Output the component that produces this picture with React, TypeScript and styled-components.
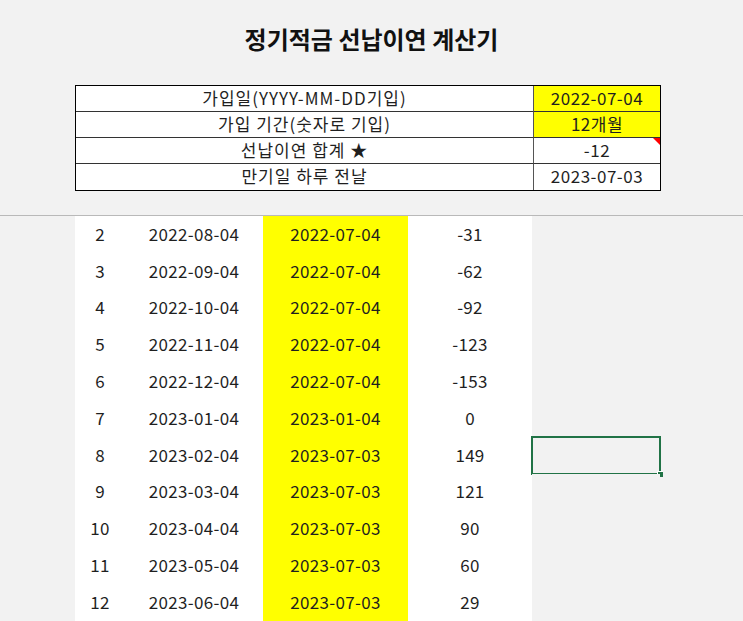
import React from "react";
import styled, { createGlobalStyle } from "styled-components";

const Global = createGlobalStyle`
  html, body { margin: 0; padding: 0; background: #f2f2f2; }
  body { font-family: "Noto Sans CJK KR", "Noto Sans", sans-serif; color: #1f1f1f; }
  * { box-sizing: border-box; }
`;

const Page = styled.div`
  width: 743px;
  height: 621px;
  overflow: hidden;
  background: #f2f2f2;
`;

const Header = styled.div`
  height: 216px;
  border-bottom: 1px solid #b9b9b9;
  padding-top: 21px;
`;

const Title = styled.h1`
  margin: 0;
  height: 36px;
  font-size: 24px;
  line-height: 36px;
  font-weight: 700;
  text-align: center;
  color: #111;
`;

const InfoTable = styled.div`
  margin: 28px 0 0 75px;
  width: 586px;
  border: 1px solid #000;
  background: #fff;
  display: grid;
  grid-template-columns: 457px 1fr;
`;

const InfoCell = styled.div<{ $yellow?: boolean; $value?: boolean; $last?: boolean }>`
  position: relative;
  height: 26px;
  border-bottom: ${(p) => (p.$last ? "none" : "1px solid #333")};
  border-left: ${(p) => (p.$value ? "1px solid #555" : "none")};
  background: ${(p) => (p.$yellow ? "#ffff00" : "#fff")};
  font-size: 17px;
  letter-spacing: ${(p) => (p.$value ? "0.5px" : "1px")};
  line-height: 24px;
  text-align: center;
  color: #1f1f1f;
`;

const NoteMark = styled.span`
  position: absolute;
  top: 0;
  right: 0;
  width: 0;
  height: 0;
  border-top: 7px solid #ff0000;
  border-left: 7px solid transparent;
`;

const Grid = styled.div`
  display: grid;
  grid-template-columns: 75px 50px 138px 145px 124px 128px 1fr;
  grid-auto-rows: 36.8px;
`;

const Gutter = styled.div`
  background: #f2f2f2;
`;

const Cell = styled.div<{ $yellow?: boolean }>`
  background: ${(p) => (p.$yellow ? "#ffff00" : "#ffffff")};
  font-size: 17px;
  letter-spacing: 0.3px;
  display: flex;
  align-items: center;
  justify-content: center;
  padding-bottom: 2px;
  color: #1f1f1f;
`;

const EmptyCell = styled.div<{ $selected?: boolean }>`
  position: relative;
  background: #f2f2f2;
  ${(p) =>
    p.$selected
      ? `outline: 2px solid #217346; outline-offset: -1px;`
      : ""}
`;

const FillHandle = styled.span`
  position: absolute;
  right: -3px;
  bottom: -3px;
  width: 6px;
  height: 6px;
  background: #217346;
  border: 1px solid #fff;
  border-right: none;
  border-bottom: none;
`;

const rows: [string, string, string, string][] = [
  ["2", "2022-08-04", "2022-07-04", "-31"],
  ["3", "2022-09-04", "2022-07-04", "-62"],
  ["4", "2022-10-04", "2022-07-04", "-92"],
  ["5", "2022-11-04", "2022-07-04", "-123"],
  ["6", "2022-12-04", "2022-07-04", "-153"],
  ["7", "2023-01-04", "2023-01-04", "0"],
  ["8", "2023-02-04", "2023-07-03", "149"],
  ["9", "2023-03-04", "2023-07-03", "121"],
  ["10", "2023-04-04", "2023-07-03", "90"],
  ["11", "2023-05-04", "2023-07-03", "60"],
  ["12", "2023-06-04", "2023-07-03", "29"],
];

export default function App() {
  return (
    <Page>
      <Global />
      <Header>
        <Title>정기적금 선납이연 계산기</Title>
        <InfoTable>
          <InfoCell>가입일(YYYY-MM-DD기입)</InfoCell>
          <InfoCell $value $yellow>2022-07-04</InfoCell>
          <InfoCell>가입 기간(숫자로 기입)</InfoCell>
          <InfoCell $value $yellow>12개월</InfoCell>
          <InfoCell>선납이연 합계 ★</InfoCell>
          <InfoCell $value>
            -12
            <NoteMark />
          </InfoCell>
          <InfoCell $last>만기일 하루 전날</InfoCell>
          <InfoCell $value $last>2023-07-03</InfoCell>
        </InfoTable>
      </Header>
      <Grid>
        {rows.map((r, i) => (
          <React.Fragment key={r[0]}>
            <Gutter />
            <Cell>{r[0]}</Cell>
            <Cell>{r[1]}</Cell>
            <Cell $yellow>{r[2]}</Cell>
            <Cell>{r[3]}</Cell>
            <EmptyCell $selected={i === 6}>{i === 6 && <FillHandle />}</EmptyCell>
            <Gutter />
          </React.Fragment>
        ))}
      </Grid>
    </Page>
  );
}
